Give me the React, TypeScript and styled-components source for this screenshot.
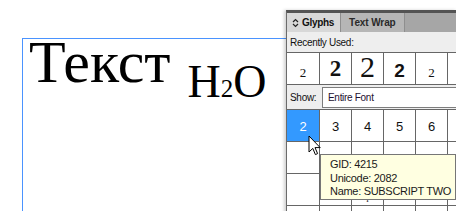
import React from 'react';
import styled, { createGlobalStyle } from 'styled-components';

const GlobalStyle = createGlobalStyle`
  html, body {
    margin: 0;
    padding: 0;
    background: #ffffff;
  }
`;

const Stage = styled.div`
  position: relative;
  width: 456px;
  height: 211px;
  overflow: hidden;
  box-sizing: border-box;
  padding: 38px 0 0 22px;
  background: #ffffff;
`;

const Frame = styled.div`
  width: 420px;
  height: 300px;
  border: 1px solid #4a93ff;
  box-sizing: border-box;
  padding: 1px 0 0 6px;
  font-family: 'Liberation Serif', 'Times New Roman', serif;
  color: #000;
`;

const Heading = styled.div`
  font-size: 60px;
  line-height: 0.75;
  white-space: nowrap;
`;

const Formula = styled.span`
  font-size: 46px;
  margin-left: 17px;
  vertical-align: -15px;
`;

const Sub = styled.span`
  font-size: 25px;
`;

const Panel = styled.div`
  position: absolute;
  left: 286px;
  top: 10px;
  width: 170px;
  height: 201px;
  overflow: hidden;
  border-top: 3px solid #535353;
  border-left: 1px solid #6b6b6b;
  background: #eeeeee;
  box-shadow: -2px 0 3px rgba(0, 0, 0, 0.18);
  font-family: 'Liberation Sans', Tahoma, sans-serif;
  color: #111;
`;

const TabBar = styled.div`
  display: flex;
  height: 19px;
  background: #a6a6a6;
`;

const Tab = styled.div<{ $active?: boolean }>`
  display: flex;
  align-items: center;
  gap: 3px;
  padding: ${(p) => (p.$active ? '0 6px 0 5px' : '0 8px 0 8px')};
  background: ${(p) => (p.$active ? '#d8d8d8' : '#b6b6b6')};
  border-right: 1px solid #8e8e8e;
  font-size: 10px;
  font-weight: bold;
  color: ${(p) => (p.$active ? '#111' : '#2a2a2a')};
  letter-spacing: ${(p) => (p.$active ? '-0.3px' : '-0.1px')};
`;

const Row = styled.div<{ $h: number }>`
  display: flex;
  align-items: center;
  height: ${(p) => p.$h}px;
  box-sizing: border-box;
  border-bottom: 1px solid #666;
  font-size: 10px;
  letter-spacing: -0.3px;
  white-space: nowrap;
`;

const Label = styled.span<{ $w?: number }>`
  padding-left: 3px;
  width: ${(p) => (p.$w ? `${p.$w}px` : 'auto')};
  flex: none;
`;

const Select = styled.div`
  flex: 1;
  height: 21px;
  box-sizing: border-box;
  margin-left: 2px;
  border: 1px solid #7d7d7d;
  border-right: none;
  background: #fff;
  display: flex;
  align-items: center;
  padding-left: 5px;
  color: #1c1030;
`;

const Grid = styled.div<{ $h: number }>`
  display: grid;
  grid-template-columns: 33px repeat(5, 32px) 20px;
  grid-auto-rows: ${(p) => p.$h}px;
`;

const Cell = styled.div<{ $pad: number; $selected?: boolean }>`
  display: flex;
  flex-direction: column;
  justify-content: flex-end;
  align-items: center;
  box-sizing: border-box;
  padding-bottom: ${(p) => p.$pad}px;
  border-right: 1px solid #666;
  border-bottom: 1px solid #666;
  background: ${(p) => (p.$selected ? '#3399ff' : '#ffffff')};
  color: ${(p) => (p.$selected ? '#ffffff' : '#111')};
`;

const Glyph = styled.span<{ $size: number; $serif?: boolean; $bold?: boolean }>`
  display: block;
  line-height: 0.7;
  font-size: ${(p) => p.$size}px;
  font-family: ${(p) =>
    p.$serif ? "'Liberation Serif', 'Times New Roman', serif" : "'Liberation Sans', Tahoma, sans-serif"};
  font-weight: ${(p) => (p.$bold ? 'bold' : 'normal')};
`;

const Tooltip = styled.div`
  position: absolute;
  left: 33px;
  top: 141px;
  width: 136px;
  height: 46px;
  box-sizing: border-box;
  padding: 3px 0 0 9px;
  background: #ffffe1;
  border: 1px solid #767676;
  font-family: 'Liberation Sans', 'Segoe UI', sans-serif;
  font-size: 11px;
  line-height: 13.5px;
  letter-spacing: -0.3px;
  color: #1a1a1a;
  white-space: nowrap;
`;

const Pointer = styled.svg`
  position: absolute;
  left: 21px;
  top: 122px;
`;

function Chevrons() {
  return (
    <svg width="7" height="10" viewBox="0 0 7 10">
      <path d="M1 4 L3.5 1.5 L6 4 M1 6 L3.5 8.5 L6 6" fill="none" stroke="#222" strokeWidth="1.2" />
    </svg>
  );
}

const recent: { size: number; serif?: boolean; bold?: boolean }[] = [
  { size: 13, serif: true },
  { size: 23, serif: true, bold: true },
  { size: 30, serif: true },
  { size: 19, bold: true },
  { size: 13, serif: true },
];

export default function App() {
  return (
    <>
      <GlobalStyle />
      <Stage>
        <Frame>
          <Heading>
            Текст
            <Formula>
              H<Sub>2</Sub>O
            </Formula>
          </Heading>
        </Frame>

        <Panel>
          <TabBar>
            <Tab $active>
              <Chevrons />
              Glyphs
            </Tab>
            <Tab>Text Wrap</Tab>
          </TabBar>
          <Row $h={21}>
            <Label>Recently Used:</Label>
          </Row>
          <Grid $h={32}>
            {recent.map((g, i) => (
              <Cell key={i} $pad={7}>
                <Glyph $size={g.size} $serif={g.serif} $bold={g.bold}>
                  2
                </Glyph>
              </Cell>
            ))}
            <Cell $pad={7} />
          </Grid>
          <Row $h={25}>
            <Label $w={30}>Show:</Label>
            <Select>Entire Font</Select>
          </Row>
          <Grid $h={32}>
            <Cell $pad={10} $selected>
              <Glyph $size={13}>2</Glyph>
            </Cell>
            {['3', '4', '5', '6'].map((d) => (
              <Cell key={d} $pad={10}>
                <Glyph $size={13}>{d}</Glyph>
              </Cell>
            ))}
            <Cell $pad={10} />

            <Cell $pad={12}>
              <Glyph $size={13}>=</Glyph>
            </Cell>
            {[0, 1, 2, 3, 4, 5].map((i) => (
              <Cell key={'r3' + i} $pad={10} />
            ))}

            <Cell $pad={6}>
              <Glyph $size={15} $serif>
                1
              </Glyph>
            </Cell>
            <Cell $pad={6} />
            <Cell $pad={6} />
            <Cell $pad={3}>
              <Glyph $size={9} $serif>
                ı
              </Glyph>
            </Cell>
            <Cell $pad={6} />
            <Cell $pad={6} />
            <Cell $pad={6} />

            {[0, 1, 2, 3, 4, 5, 6].map((i) => (
              <Cell key={'r5' + i} $pad={6} />
            ))}
          </Grid>

          <Tooltip>
            GID: 4215
            <br />
            Unicode: 2082
            <br />
            Name: SUBSCRIPT TWO
          </Tooltip>

          <Pointer width="14" height="22" viewBox="0 0 14 22">
            <path
              d="M1 1 L1 17 L4.8 13.4 L7.4 19.6 L9.6 18.6 L7 12.6 L12.2 12.6 Z"
              fill="#ffffff"
              stroke="#000000"
              strokeWidth="1"
              strokeLinejoin="round"
            />
          </Pointer>
        </Panel>
      </Stage>
    </>
  );
}
